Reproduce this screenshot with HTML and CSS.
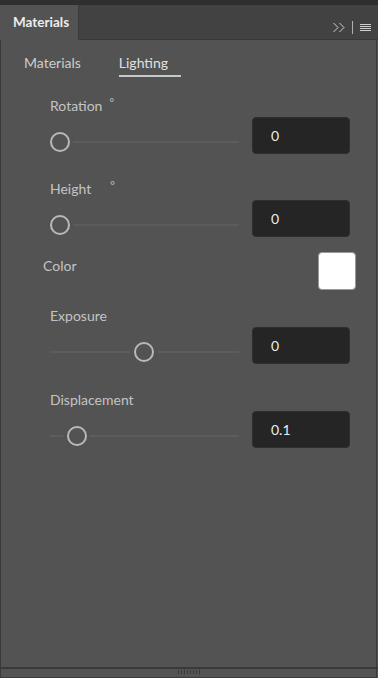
FILE: index.html
```html
<!DOCTYPE html>
<html>
<head>
<meta charset="utf-8">
<link rel="stylesheet" href="styles.css">
</head>
<body>
<div class="window">
  <div class="topstrip"></div>
  <div class="tabbar">
    <div class="tab">Materials</div>
    <div class="tabbar-rest">
      <svg class="ico-chev" width="14" height="11" viewBox="0 0 14 11"><polyline points="1.5,1 6,5.5 1.5,10" fill="none" stroke="#cfcfcf" stroke-width="1"/><polyline points="7.5,1 12,5.5 7.5,10" fill="none" stroke="#cfcfcf" stroke-width="1"/></svg>
      <span class="ico-sep"></span>
      <svg class="ico-menu" width="11" height="8" viewBox="0 0 11 8"><rect x="0" y="0" width="11" height="1" fill="#cfcfcf"/><rect x="0" y="2" width="11" height="1" fill="#cfcfcf"/><rect x="0" y="4" width="11" height="1" fill="#cfcfcf"/><rect x="0" y="6" width="11" height="1" fill="#cfcfcf"/></svg>
    </div>
  </div>
  <div class="panel">
    <div class="subtabs">
      <span class="subtab">Materials</span>
      <span class="subtab active">Lighting</span>
    </div>

    <div class="control">
      <div class="label">Rotation<span class="deg">°</span></div>
      <div class="row">
        <div class="slider"><div class="track"></div><div class="thumb" style="left:0px"></div></div>
        <div class="input">0</div>
      </div>
    </div>

    <div class="control">
      <div class="label">Height<span class="deg deg-h">°</span></div>
      <div class="row">
        <div class="slider"><div class="track"></div><div class="thumb" style="left:0px"></div></div>
        <div class="input">0</div>
      </div>
    </div>

    <div class="color-row">
      <div class="label color-label">Color</div>
      <div class="swatch"></div>
    </div>

    <div class="control control-exp">
      <div class="label">Exposure</div>
      <div class="row">
        <div class="slider"><div class="track"></div><div class="thumb" style="left:84px"></div></div>
        <div class="input">0</div>
      </div>
    </div>

    <div class="control control-disp">
      <div class="label">Displacement</div>
      <div class="row">
        <div class="slider"><div class="track"></div><div class="thumb" style="left:17px"></div></div>
        <div class="input">0.1</div>
      </div>
    </div>
  </div>
  <div class="grip-line"></div>
  <div class="grip">
    <span></span><span></span><span></span><span></span><span></span><span></span><span></span><span></span>
  </div>
</div>
</body>
</html>
```

FILE: styles.css
```css
html, body {
  margin: 0;
  padding: 0;
}
body {
  background: #535353;
  font-family: Lato, "Open Sans", "Liberation Sans", sans-serif;
  width: 378px;
  height: 678px;
  overflow: hidden;
}
.window {
  width: 378px;
  height: 678px;
  display: flex;
  flex-direction: column;
}
.topstrip {
  height: 5px;
  background: #2f2f2f;
}
.tabbar {
  height: 35px;
  display: flex;
  background: #535353;
}
.tab {
  margin-left: 2px;
  padding-left: 11px;
  background: #535353;
  color: #ececec;
  font-weight: bold;
  font-size: 13.5px;
  line-height: 20px;
  padding-top: 7px;
  box-sizing: border-box;
  width: 76px;
}
.tabbar-rest {
  flex: 1;
  background: #424242;
  border-bottom: 1px solid #383838;
  border-left: 1px solid #3a3a3a;
  display: flex;
  align-items: flex-start;
  justify-content: flex-end;
  padding-right: 7px;
}
.ico-chev {
  margin-top: 17px;
}
.ico-sep {
  width: 1px;
  height: 13px;
  background: #b0b0b0;
  margin-top: 16px;
  margin-left: 6px;
  margin-right: 7px;
}
.ico-menu {
  margin-top: 19px;
}
.panel {
  height: 627px;
  box-sizing: border-box;
  border-left: 1px solid #3a3a3a;
  border-right: 1px solid #3a3a3a;
  margin-right: 1px;
  background: #535353;
  display: flex;
  flex-direction: column;
}
.subtabs {
  display: flex;
  margin-top: 13px;
  padding-left: 23px;
  gap: 38px;
}
.subtab {
  font-size: 14px;
  line-height: 20px;
  color: #cdcdcd;
  padding-bottom: 2px;
  border-bottom: 2px solid transparent;
}
.subtab.active {
  color: #e0e0e0;
  border-bottom-color: #c8c8c8;
  padding-right: 13px;
}
.control {
  padding-left: 49px;
  margin-top: 19px;
}
.control + .control {
  margin-top: 25px;
}
.control-exp {
  margin-top: 16px;
}
.control-disp.control {
  margin-top: 26px;
}
.label {
  font-size: 14px;
  line-height: 20px;
  height: 20px;
  color: #c4c4c4;
  margin-bottom: 1px;
}
.deg {
  display: inline-block;
  margin-left: 7px;
  font-size: 11px;
  vertical-align: top;
  line-height: 14px;
}
.deg-h {
  margin-left: 19px;
}
.row {
  display: flex;
  align-items: flex-start;
}
.slider {
  position: relative;
  width: 189px;
  height: 37px;
}
.track {
  position: absolute;
  left: 0;
  right: 0;
  top: 24px;
  height: 2px;
  background: #5c5c5c;
}
.thumb {
  position: absolute;
  top: 15px;
  width: 20px;
  height: 20px;
  box-sizing: border-box;
  border: 2px solid #b9b9b9;
  border-radius: 50%;
  background: #535353;
  box-shadow: 0 0 0 3px #535353;
}
.input {
  margin-left: 13px;
  width: 98px;
  height: 37px;
  box-sizing: border-box;
  background: #252525;
  border: 1px solid #2e2e2e;
  border-radius: 4px;
  color: #ececec;
  font-size: 14px;
  line-height: 35px;
  padding-left: 18px;
}
.color-row {
  display: flex;
  justify-content: space-between;
  align-items: flex-start;
  margin-top: 15px;
  padding-left: 42px;
  padding-right: 20px;
}
.color-label {
  margin-top: 4px;
}
.swatch {
  width: 38px;
  height: 38px;
  box-sizing: border-box;
  background: #ffffff;
  border: 1px solid #9a9a9a;
  border-radius: 4px;
}
.grip-line {
  height: 2px;
  background: #3a3a3a;
}
.grip {
  border-left: 1px solid #3a3a3a;
  border-right: 1px solid #3a3a3a;
  border-bottom: 1px solid #3a3a3a;
  margin-right: 1px;
  display: flex;
  justify-content: center;
  align-items: flex-start;
  gap: 2px;
  padding-top: 1px;
  box-sizing: content-box;
  height: 7px;
}
.grip span {
  width: 1px;
  height: 4px;
  background: #3a3a3a;
}
```
